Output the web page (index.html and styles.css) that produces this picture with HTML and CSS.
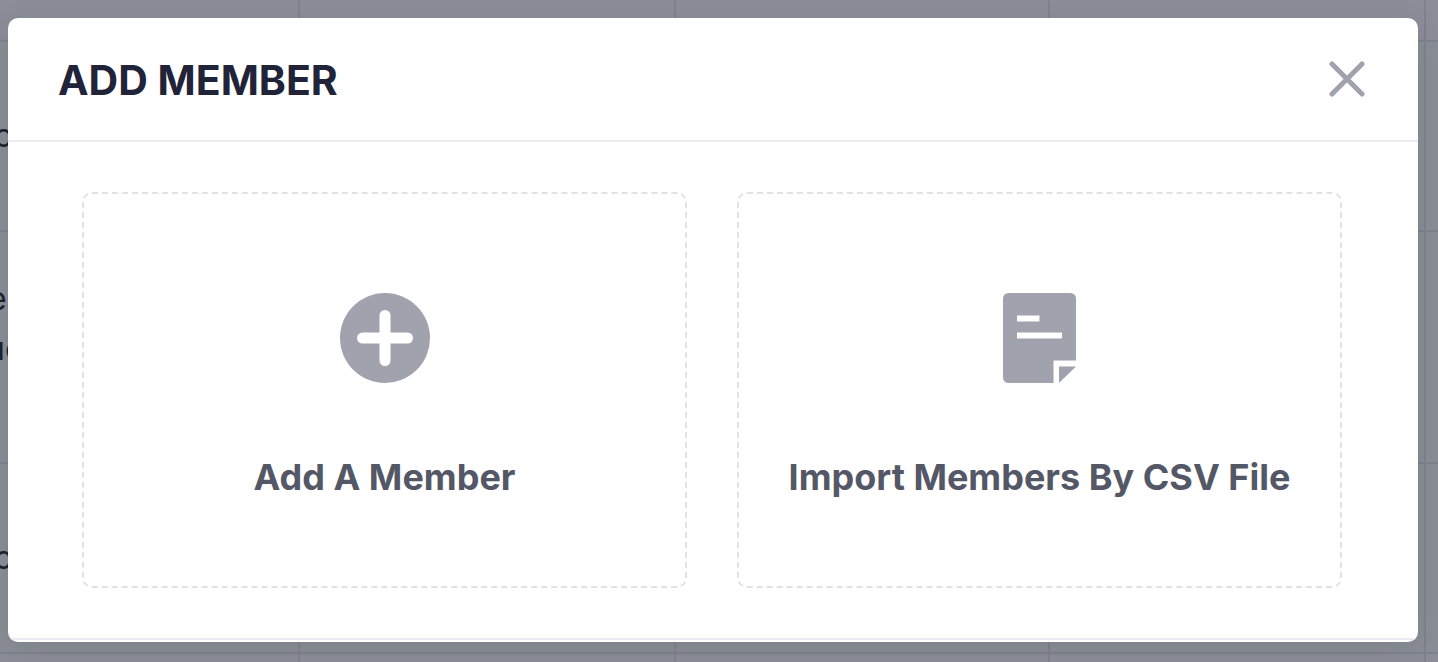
FILE: index.html
```html
<!DOCTYPE html>
<html lang="en">
<head>
<meta charset="utf-8">
<title>Add Member</title>
<link rel="stylesheet" href="styles.css">
</head>
<body>
<main class="page">
<table class="members" aria-hidden="true">
  <thead>
    <tr><th class="col-first"></th><th class="col-wide"></th><th class="col"></th><th class="col-wide"></th><th></th></tr>
  </thead>
  <tbody>
    <tr class="row"><td>o</td><td></td><td></td><td></td><td></td></tr>
    <tr class="row row-tall"><td>e<br><span class="line">uc</span><br>&nbsp;</td><td></td><td></td><td></td><td></td></tr>
    <tr class="row"><td>o</td><td></td><td></td><td></td><td></td></tr>
  </tbody>
  <tfoot>
    <tr><th></th><th></th><th></th><th></th><th></th></tr>
  </tfoot>
</table>
</main>
<div class="overlay">
  <section class="dialog" role="dialog" aria-modal="true" aria-labelledby="dialog-title">
    <header class="dialog-header">
      <h1 class="dialog-title" id="dialog-title">ADD MEMBER</h1>
      <button class="close" type="button" aria-label="Close">
        <svg class="close-icon" viewBox="0 0 36 36" aria-hidden="true"><path d="M3 3l30 30M33 3l-30 30"/></svg>
      </button>
    </header>
    <div class="options">
      <button class="option" type="button">
        <svg class="option-icon" viewBox="0 0 90 90" aria-hidden="true">
          <circle cx="45" cy="45" r="45"/>
          <path class="plus" d="M45 22.500v45M22.500 45h45"/>
        </svg>
        <span>Add A Member</span>
      </button>
      <button class="option" type="button">
        <svg class="option-icon" viewBox="0 0 90 90" aria-hidden="true">
          <path fill-rule="evenodd" d="M13.500 0H75.500a5.500 5.500 0 0 1 5.500 5.500V67.500H58.500V90H13.500A5.500 5.500 0 0 1 8 84.500V5.500A5.500 5.500 0 0 1 13.500 0zM22 22.500v6h22.500v-6zM22 39.500v6h45v-6z"/>
          <path d="M64 73.500h17L64 90z"/>
        </svg>
        <span>Import Members By CSV File</span>
      </button>
    </div>
  </section>
</div>
</body>
</html>
```
FILE: styles.css
```css
* {
  box-sizing: border-box;
}

body {
  margin: 0;
  background: #8b8d98;
  font-family: Inter, "Liberation Sans", sans-serif;
}

.page {
  height: 100vh;
  overflow: hidden;
}

.members {
  width: 100%;
  table-layout: fixed;
  border-collapse: separate;
  border-spacing: 0;
  color: #20222c;
  font-size: 32px;
  line-height: 50px;
}

.members th,
.members td {
  padding: 0;
  border-right: 2px solid #80828d;
  border-bottom: 2px solid #80828d;
  text-indent: -6px;
}

.members th {
  height: 42px;
}

.members th:last-child,
.members td:last-child {
  border-right: 0;
}

.col-first {
  width: 300px;
}

.col {
  width: 374px;
}

.col-wide {
  width: 376px;
}

.row {
  height: 190px;
  background: #8a8e96;
}

.row-tall {
  height: 232px;
}

.members .row-tall td {
  padding-top: 4px;
  text-indent: -12px;
}

.line {
  margin-left: -14px;
}

.overlay {
  position: absolute;
  inset: 0;
  padding: 18px 20px 20px 8px;
}

.dialog {
  padding-bottom: 2px;
  border-radius: 10px;
  overflow: hidden;
  background: #fff;
  box-shadow: 0 8px 32px rgba(32, 34, 44, 0.12);
}

.dialog-header {
  display: flex;
  align-items: center;
  justify-content: space-between;
  padding: 36px 53px 34px 50px;
  border-bottom: 2px solid #ebebf2;
}

.dialog-title {
  margin: 0;
  color: #212338;
  font-size: 41px;
  font-weight: 700;
  line-height: 52px;
}

.close {
  display: flex;
  padding: 0 0 2px;
  border: 0;
  background: none;
}

.close-icon {
  width: 36px;
  height: 36px;
  fill: none;
  stroke: #a0a2ae;
  stroke-width: 5;
  stroke-linecap: round;
}

.options {
  display: grid;
  grid-template-columns: 1fr 1fr;
  gap: 50px;
  padding: 50px 76px 50px 74px;
  border-bottom: 2px solid #ebebf2;
}

.option {
  display: flex;
  flex-direction: column;
  align-items: center;
  gap: 72px;
  padding: 99px 20px 87px;
  border: 2px dashed #e1e1e6;
  border-radius: 10px;
  background: none;
  color: #545766;
  font: 700 36px/44px Inter, "Liberation Sans", sans-serif;
}

.option-icon {
  width: 90px;
  height: 90px;
  fill: #a0a2ae;
}

.plus {
  stroke: #fff;
  stroke-width: 11;
  stroke-linecap: round;
}
```
